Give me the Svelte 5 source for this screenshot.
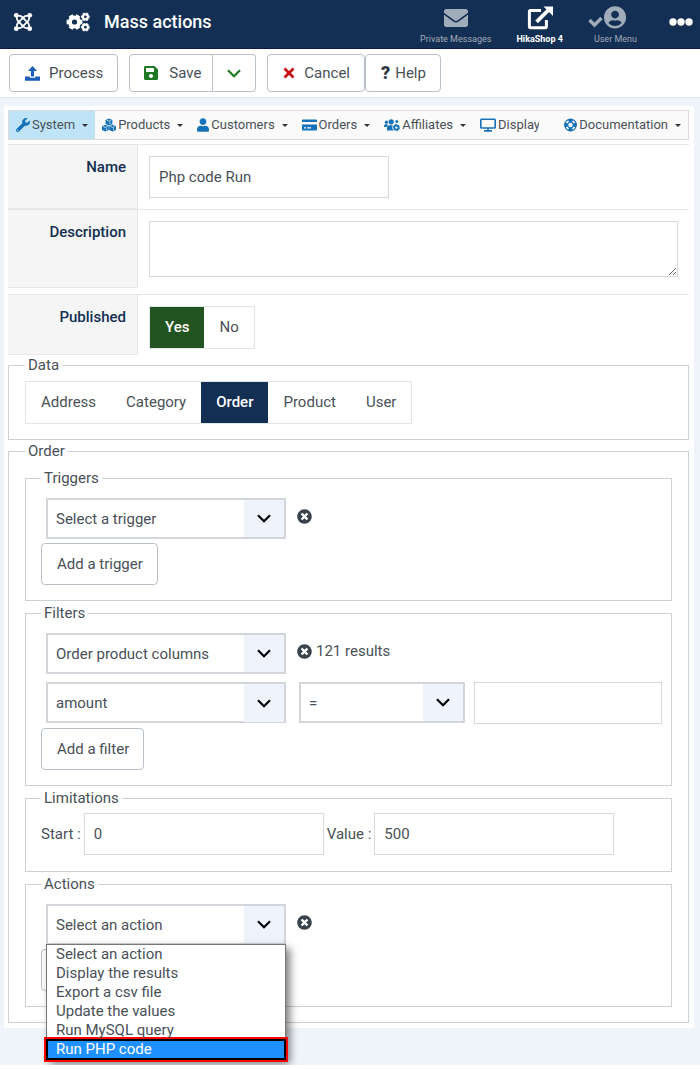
<script>
  const MENU = [
    { label: 'System', icon: 'wrench', caret: true },
    { label: 'Products', icon: 'cubes', caret: true },
    { label: 'Customers', icon: 'user', caret: true },
    { label: 'Orders', icon: 'card', caret: true },
    { label: 'Affiliates', icon: 'users', caret: true },
    { label: 'Display', icon: 'desktop', caret: false },
    { label: 'Documentation', icon: 'ring', caret: true }
  ]
  const TABLES = ['Address', 'Category', 'Order', 'Product', 'User']
  const ACTIONS = [
    'Select an action',
    'Display the results',
    'Export a csv file',
    'Update the values',
    'Run MySQL query',
    'Run PHP code'
  ]

  let name = $state('Php code Run')
  let description = $state('')
  let published = $state('Yes')
  let table = $state('Order')
  let start = $state('0')
  let limit = $state('500')
  let filterValue = $state('')
  let action = $state('Select an action')
  let highlighted = $state('Run PHP code')
  let open = $state(true)

  function toggleActions(e) {
    e.preventDefault()
    open = !open
  }

  function pickAction(value) {
    action = value
    open = false
  }
</script>

{#snippet icon(kind)}
  {#if kind === 'joomla'}
    <svg width="20" height="20" viewBox="0 0 20 20" fill="none" stroke="currentColor" stroke-width="1.8">
      {#each [0, 90, 180, 270] as r (r)}
        <g transform="rotate({r} 10 10)">
          <circle cx="3.3" cy="3.3" r="2.4" fill="currentColor" stroke="none" />
          <path d="M3.9 4v2.6q0 1.4 1.2 2.6l5.6 5.6" />
          <path d="M4 3.9h2.6q1.4 0 2.6 1.2l1.8 1.8" />
        </g>
      {/each}
    </svg>
  {:else if kind === 'gears'}
    <svg width="24" height="20" viewBox="0 0 24 20" fill="none" stroke="currentColor">
      <circle cx="8.5" cy="10" r="4.6" stroke-width="4" />
      <circle cx="8.5" cy="10" r="6.8" stroke-width="2.4" pathLength="12" stroke-dasharray="1.2 .8" stroke-dashoffset=".6" />
      <circle cx="19.4" cy="4.8" r="2.5" stroke-width="2.2" />
      <circle cx="19.4" cy="4.8" r="3.7" stroke-width="1.2" pathLength="12" stroke-dasharray="1.3 .7" stroke-dashoffset=".6" />
      <circle cx="19.4" cy="15.2" r="2.5" stroke-width="2.2" />
      <circle cx="19.4" cy="15.2" r="3.7" stroke-width="1.2" pathLength="12" stroke-dasharray="1.3 .7" stroke-dashoffset=".6" />
    </svg>
  {:else if kind === 'envelope'}
    <svg width="24" height="24" viewBox="0 0 512 512" fill="currentColor">
      <path d="M502.3 190.8c3.9-3.1 9.7-.2 9.7 4.7V400c0 26.5-21.5 48-48 48H48c-26.5 0-48-21.5-48-48V195.6c0-5 5.7-7.8 9.7-4.7 22.4 17.4 52.1 39.5 154.1 113.6 21.1 15.4 56.7 47.8 92.2 47.6 35.7.3 72-32.8 92.3-47.6 102-74.1 131.6-96.3 154-113.7zM256 320c23.2.4 56.6-29.2 73.4-41.4 132.7-96.3 142.8-104.7 173.4-128.7 5.8-4.5 9.2-11.5 9.2-18.9v-19c0-26.5-21.5-48-48-48H48c-26.5 0-48 21.5-48 48v19c0 7.4 3.4 14.3 9.2 18.9 30.6 23.9 40.7 32.4 173.4 128.7 16.8 12.2 50.2 41.8 73.4 41.4z" />
    </svg>
  {:else if kind === 'external'}
    <svg width="26" height="24" viewBox="0 0 26 24" fill="none" stroke="currentColor">
      <path d="M14 4.6H3.6q-1.2 0-1.2 1.2v14.8q0 1.2 1.2 1.2h14.6q1.2 0 1.2-1.2V14" stroke-width="3" />
      <path d="M9.6 15.8 21.5 4" stroke-width="3.8" />
      <path d="M16.5.5H26v9.5z" fill="currentColor" stroke="none" />
    </svg>
  {:else if kind === 'usermenu'}
    <svg width="38" height="24" viewBox="0 0 38 24" fill="currentColor">
      <path d="m1.5 14 5 5 7-7" fill="none" stroke="currentColor" stroke-width="3.4" />
      <g transform="translate(16 0) scale(.0446)">
        <path d="M248 8C111 8 0 119 0 256s111 248 248 248 248-111 248-248S385 8 248 8zm0 96c48.6 0 88 39.4 88 88s-39.4 88-88 88-88-39.4-88-88 39.4-88 88-88zm0 344c-58.7 0-111.3-26.6-146.5-68.2 18.8-35.4 55.6-59.8 98.5-59.8 2.4 0 4.8.4 7.1 1.1 13 4.2 26.6 6.9 40.9 6.9 14.3 0 28-2.7 40.9-6.9 2.3-.7 4.7-1.1 7.1-1.1 42.9 0 79.7 24.4 98.5 59.8C359.3 421.4 306.7 448 248 448z" />
      </g>
    </svg>
  {:else if kind === 'dots'}
    <svg width="24" height="8" viewBox="0 0 24 8" fill="currentColor">
      <circle cx="4" cy="4" r="3.7" /><circle cx="12" cy="4" r="3.7" /><circle cx="20" cy="4" r="3.7" />
    </svg>
  {:else if kind === 'upload'}
    <svg width="15" height="15" viewBox="0 0 15 15" fill="currentColor">
      <path d="M7.5 0 12 5H9v5.5H6V5H3z" />
      <path d="M0 10.5h4.8v1.3h5.4v-1.3H15v4.3H0z" />
    </svg>
  {:else if kind === 'save'}
    <svg width="14" height="16" viewBox="0 0 448 512" fill="currentColor">
      <path d="M433.941 129.941l-83.882-83.882A48 48 0 0 0 316.118 32H48C21.49 32 0 53.49 0 80v352c0 26.51 21.49 48 48 48h352c26.51 0 48-21.49 48-48V163.882a48 48 0 0 0-14.059-33.941zM224 416c-35.346 0-64-28.654-64-64 0-35.346 28.654-64 64-64s64 28.654 64 64c0 35.346-28.654 64-64 64zm96-304.52V212c0 6.627-5.373 12-12 12H76c-6.627 0-12-5.373-12-12V108c0-6.627 5.373-12 12-12h228.52c3.183 0 6.235 1.264 8.485 3.515l3.48 3.48A11.996 11.996 0 0 1 320 111.48z" />
    </svg>
  {:else if kind === 'chevron'}
    <svg width="14" height="9" viewBox="0 0 14 9" fill="none" stroke="currentColor" stroke-width="2.2">
      <path d="m1 1.3 6 6 6-6" />
    </svg>
  {:else if kind === 'cross'}
    <svg width="12" height="12" viewBox="0 0 12 12" stroke="currentColor" stroke-width="2.8">
      <path d="m1.5 1.5 9 9M10.500 1.500l-9 9" />
    </svg>
  {:else if kind === 'wrench'}
    <svg width="14" height="14" viewBox="0 0 512 512" fill="currentColor">
      <path d="M507.73 109.1c-2.24-9.03-13.54-12.09-20.12-5.51l-74.36 74.36-67.88-11.31-11.31-67.88 74.36-74.36c6.62-6.62 3.43-17.9-5.66-20.16-47.38-11.74-99.55.91-136.58 37.93-39.64 39.64-50.55 97.1-34.05 147.2L18.74 402.76c-24.99 24.99-24.99 65.51 0 90.5 24.99 24.99 65.51 24.99 90.5 0l213.21-213.21c50.12 16.71 107.47 5.68 147.37-34.22 37.07-37.07 49.7-89.32 37.91-136.73zM64 472c-13.25 0-24-10.75-24-24 0-13.26 10.75-24 24-24s24 10.74 24 24c0 13.25-10.75 24-24 24z" />
    </svg>
  {:else if kind === 'cubes'}
    <svg width="14" height="14" viewBox="0 0 14 14" fill="currentColor">
      {#each [[3.6, 0.4], [0, 6.6], [7.2, 6.6]] as [x, y] (x)}
        <g transform="translate({x} {y})">
          <path d="M0 1.6 3.4.2l3.400 1.400v3.900L3.400 7 0 5.500z" />
          <path d="m1.200 1.900 2.200.9 2.200-.9M4.300 3.700v2" fill="none" stroke="#fff" stroke-width=".7" />
        </g>
      {/each}
    </svg>
  {:else if kind === 'user'}
    <svg width="12" height="14" viewBox="0 0 448 512" fill="currentColor">
      <path d="M224 256c70.7 0 128-57.3 128-128S294.7 0 224 0 96 57.3 96 128s57.3 128 128 128zm89.6 32h-16.7c-22.2 10.2-46.9 16-72.9 16s-50.6-5.8-72.9-16h-16.7C60.2 288 0 348.2 0 422.4V464c0 26.5 21.5 48 48 48h352c26.5 0 48-21.5 48-48v-41.6c0-74.2-60.2-134.4-134.4-134.4z" />
    </svg>
  {:else if kind === 'card'}
    <svg width="15" height="14" viewBox="0 0 15 14" fill="currentColor" fill-rule="evenodd">
      <path d="M1 1.5h13q1 0 1 1V4H0V2.500q0-1 1-1zM0 6.500h15v5q0 1-1 1H1q-1 0-1-1zM2 9.300v1.200h2V9.300zm3 0v1.200h4V9.300z" />
    </svg>
  {:else if kind === 'users'}
    <svg width="16" height="14" viewBox="0 0 16 14" fill="currentColor">
      <circle cx="2.4" cy="4.2" r="1.6" />
      <circle cx="7.2" cy="3.8" r="2.6" />
      <circle cx="12.8" cy="3.6" r="1.5" />
      <path d="M0 9V8q0-1.700 1.700-1.700h1.600q.7 0 1 .4Q2.900 7.700 2.700 9zM3 12.500V10q0-2.800 2.800-2.800h3Q8 8.600 8.300 10.200q.3 1.300 1.400 2.300z" />
      <circle cx="12.4" cy="9.6" r="2.1" fill="none" stroke="currentColor" stroke-width="1.8" />
      <circle cx="12.4" cy="9.6" r="3.1" fill="none" stroke="currentColor" pathLength="12" stroke-dasharray="1.2 .8" />
    </svg>
  {:else if kind === 'desktop'}
    <svg width="16" height="14" viewBox="0 0 16 14" fill="none" stroke="currentColor" stroke-width="1.6">
      <rect x=".8" y="1.3" width="14.4" height="8.7" rx=".8" />
      <path d="M8 10v2.5M4 12.9h8" />
    </svg>
  {:else if kind === 'ring'}
    <svg width="13" height="14" viewBox="0 0 13 14" fill="none" stroke="currentColor">
      <circle cx="6.5" cy="7" r="5.8" stroke-width="1.2" />
      <circle cx="6.5" cy="7" r="2.8" stroke-width="1.2" />
      <circle cx="6.5" cy="7" r="4.3" stroke-width="3.2" pathLength="8" stroke-dasharray="1.2 .8" stroke-dashoffset=".6" />
    </svg>
  {:else if kind === 'remove'}
    <svg width="15" height="15" viewBox="0 0 512 512" fill="currentColor">
      <path d="M256 8C119 8 8 119 8 256s111 248 248 248 248-111 248-248S393 8 256 8zm121.6 313.1c4.7 4.7 4.7 12.3 0 17L338 377.6c-4.7 4.7-12.3 4.7-17 0L256 312l-65.1 65.6c-4.7 4.7-12.3 4.7-17 0L134.4 338c-4.7-4.7-4.7-12.3 0-17l65.6-65-65.6-65.1c-4.7-4.7-4.7-12.3 0-17l39.6-39.6c4.7-4.7 12.3-4.7 17 0l65 65.7 65.1-65.6c4.7-4.7 12.3-4.7 17 0l39.6 39.6c4.7 4.7 4.7 12.3 0 17L312 256l65.6 65.1z" />
    </svg>
  {/if}
{/snippet}

{#snippet dropdown(label, value)}
  <div class="select">
    <select aria-label={label}>
      <option>{value}</option>
    </select>
    <span class="arrow">{@render icon('chevron')}</span>
  </div>
{/snippet}

<header class="topbar">
  <a class="brand" href="#home" aria-label="Home">{@render icon('joomla')}</a>
  {@render icon('gears')}
  <h1>Mass actions</h1>
  <nav class="shortcuts" aria-label="Shortcuts">
    <a href="#messages">{@render icon('envelope')}<span>Private Messages</span></a>
    <a class="current" href="#shop">{@render icon('external')}<span>HikaShop 4</span></a>
    <a class="account" href="#account">{@render icon('usermenu')}<span>User Menu</span></a>
  </nav>
  <button class="more" aria-label="More">{@render icon('dots')}</button>
</header>

<div class="toolbar">
  <button class="btn process">{@render icon('upload')}Process</button>
  <div class="group">
    <button class="btn save">{@render icon('save')}Save</button>
    <button class="btn save-more" aria-label="More save options">{@render icon('chevron')}</button>
  </div>
  <div class="group">
    <button class="btn cancel">{@render icon('cross')}Cancel</button>
    <button class="btn help"><b>?</b>Help</button>
  </div>
</div>

<main>
  <div class="card">
    <nav class="menu" aria-label="Shop">
      {#each MENU as item, i (item.label)}
        <a class:active={i === 0} class:last={i === MENU.length - 1} href="#{item.icon}">
          {@render icon(item.icon)}
          <span class:clipped={!item.caret}>{item.label}</span>
          {#if item.caret}<i class="caret"></i>{/if}
        </a>
      {/each}
    </nav>

    <div class="row">
      <label class="key" for="name">Name</label>
      <div class="value"><input id="name" type="text" bind:value={name} /></div>
    </div>
    <div class="row">
      <label class="key" for="description">Description</label>
      <div class="value"><textarea id="description" bind:value={description}></textarea></div>
    </div>
    <div class="row spaced">
      <span class="key" id="published">Published</span>
      <div class="value">
        <div class="switch" role="radiogroup" aria-labelledby="published">
          {#each ['Yes', 'No'] as option (option)}
            <label class:yes={option === 'Yes' && published === 'Yes'}>
              <input type="radio" name="published" value={option} bind:group={published} />{option}
            </label>
          {/each}
        </div>
      </div>
    </div>

    <fieldset class="outer data">
      <legend>Data</legend>
      <div class="switch">
        {#each TABLES as option (option)}
          <label class:picked={table === option}>
            <input type="radio" name="table" value={option} bind:group={table} />{option}
          </label>
        {/each}
      </div>
    </fieldset>

    <fieldset class="outer">
      <legend>Order</legend>

      <fieldset class="inner">
        <legend>Triggers</legend>
        <div class="line">
          {@render dropdown('Trigger', 'Select a trigger')}
          <button class="remove" aria-label="Remove trigger">{@render icon('remove')}</button>
        </div>
        <button class="btn add">Add a trigger</button>
      </fieldset>

      <fieldset class="inner">
        <legend>Filters</legend>
        <div class="line">
          {@render dropdown('Filter', 'Order product columns')}
          <button class="remove" aria-label="Remove filter">{@render icon('remove')}</button>
          <span class="results">121 results</span>
        </div>
        <div class="line condition">
          {@render dropdown('Column', 'amount')}
          <div class="operator">{@render dropdown('Operator', '=')}</div>
          <input type="text" aria-label="Filter value" bind:value={filterValue} />
        </div>
        <button class="btn add">Add a filter</button>
      </fieldset>

      <fieldset class="inner limits">
        <legend>Limitations</legend>
        <div class="limit-line">
          <label for="start">Start :</label>
          <input id="start" type="text" bind:value={start} />
          <label for="limit">Value :</label>
          <input id="limit" type="text" bind:value={limit} />
        </div>
      </fieldset>

      <fieldset class="inner">
        <legend>Actions</legend>
        <div class="line">
          <div class="select">
            <select aria-label="Action" bind:value={action} onmousedown={toggleActions}>
              {#each ACTIONS as option (option)}
                <option>{option}</option>
              {/each}
            </select>
            <span class="arrow">{@render icon('chevron')}</span>
            {#if open}
              <div class="popup" role="listbox" aria-label="Actions">
                {#each ACTIONS as option (option)}
                  <button
                    role="option"
                    aria-selected={highlighted === option}
                    class:highlighted={highlighted === option}
                    onmouseenter={() => (highlighted = option)}
                    onclick={() => pickAction(option)}
                  >
                    {option}
                  </button>
                {/each}
              </div>
            {/if}
          </div>
          <button class="remove" aria-label="Remove action">{@render icon('remove')}</button>
        </div>
        <button class="btn add">Add an action</button>
      </fieldset>
    </fieldset>
  </div>
</main>

<style>
  :global(body) {
    background: #fff;
    color: #495057;
    font-family: Roboto, sans-serif;
    font-size: 15px;
    line-height: 18px;
  }

  * {
    box-sizing: border-box;
  }

  svg {
    display: block;
    flex: none;
  }

  button,
  input,
  select,
  textarea {
    color: inherit;
    font: inherit;
    margin: 0;
  }

  a {
    color: inherit;
    text-decoration: none;
  }

  .topbar {
    display: flex;
    align-items: center;
    height: 49px;
    padding: 0 7px 4px 13px;
    background: #132f53;
    border-bottom: 1px solid #0b1a40;
    color: #fff;
  }

  .brand {
    margin-right: 33px;
  }

  h1 {
    flex: 1;
    margin: 0 0 0 14px;
    font-size: 18px;
    font-weight: 500;
    white-space: nowrap;
  }

  .shortcuts {
    display: flex;
    gap: 25px;
    padding-top: 7px;
  }

  .shortcuts a {
    display: flex;
    flex-direction: column;
    align-items: center;
    gap: 3px;
    color: #a1acba;
    font-size: 9px;
    line-height: 12px;
    white-space: nowrap;
  }

  .shortcuts .current {
    color: #fff;
    font-weight: 700;
  }

  .shortcuts .account {
    align-items: flex-start;
  }

  .account span {
    padding-left: 6px;
  }

  .more {
    margin-left: 32px;
    padding: 0;
    background: none;
    border: 0;
    color: #fff;
  }

  .toolbar {
    display: flex;
    gap: 11px;
    padding: 5px 9px;
    border-bottom: 1px solid #e4e8f0;
  }

  .group {
    display: flex;
  }

  .btn {
    display: flex;
    align-items: center;
    justify-content: center;
    height: 38px;
    padding: 0 14px 0 15px;
    gap: 9px;
    background: #fff;
    border: 1px solid #b8c0c9;
    border-radius: 4px;
    white-space: nowrap;
    cursor: pointer;
  }

  .process svg {
    color: #1d5fb8;
  }

  .save {
    padding: 0 11px 0 14px;
    gap: 11px;
    border-radius: 4px 0 0 4px;
  }

  .save svg,
  .save-more {
    color: #1b7a23;
  }

  .save-more {
    padding: 0 14px;
    border-left: 0;
    border-radius: 0 4px 4px 0;
  }

  .cancel svg {
    color: #c40f14;
  }

  .help {
    gap: 5px;
  }

  .help b {
    font-size: 18px;
    font-weight: 900;
    color: #2c3640;
  }

  main {
    padding: 8px 6px 37px 4px;
    background: #eff4fb;
  }

  .card {
    padding: 4px 5px 5px 4px;
    background: #fff;
  }

  .menu {
    display: flex;
    margin-bottom: 4px;
    background: #fafafa;
    border: 1px solid #dcdcdc;
    font-size: 13px;
  }

  .menu a {
    display: flex;
    align-items: center;
    height: 28px;
    padding: 0 7px;
    gap: 2px;
    white-space: nowrap;
  }

  .menu svg {
    color: #1572b8;
  }

  .menu .active {
    background: #bfe3f7;
  }

  .menu .last {
    margin-left: auto;
  }

  .clipped {
    width: 41px;
    overflow: hidden;
  }

  .caret {
    margin-left: 5px;
    border: 3px solid transparent;
    border-top-color: #333;
    border-bottom: 0;
  }

  .row {
    display: flex;
    border-top: 1px solid #e4e7ea;
  }

  .key {
    width: 130px;
    flex: none;
    padding: 13px 11px 0 0;
    background: #f5f5f5;
    border-right: 1px solid #e6e8ea;
    border-bottom: 1px solid #e6e8ea;
    color: #132f53;
    font-weight: 500;
    text-align: right;
  }

  .row .value {
    flex: 1;
    display: flex;
    padding: 11px;
  }

  .spaced {
    margin-top: 6px;
  }

  .spaced .value {
    padding-bottom: 6px;
  }

  input[type='text'],
  textarea {
    width: 240px;
    height: 42px;
    padding: 0 9px;
    background: #fff;
    border: 1px solid #d5dade;
    outline: 0;
  }

  textarea {
    flex: 1;
    height: 56px;
    padding: 9px;
  }

  .switch {
    display: inline-flex;
    border: 1px solid #e0e5e9;
  }

  .switch label {
    padding: 12px 15px;
    line-height: 17px;
    cursor: pointer;
  }

  .switch input {
    appearance: none;
    width: 0;
    height: 0;
    position: absolute;
  }

  .switch .yes {
    background: #215421;
    color: #fff;
    font-weight: 500;
  }

  .switch .picked {
    background: #132f53;
    color: #fff;
    font-weight: 500;
  }

  fieldset {
    min-width: 0;
    margin: 0;
    border: 1px solid #ced1d3;
  }

  legend {
    padding: 0 3px;
  }

  .outer {
    margin-top: 2px;
    padding: 9px 16px 15px;
  }

  .data {
    display: flow-root;
    margin-top: 1px;
    padding-top: 7px;
  }

  .inner {
    padding: 11px 9px 15px 15px;
  }

  .inner + .inner {
    margin-top: 3px;
  }

  .line {
    display: flex;
    margin: 0 0 4px 5px;
  }

  .select {
    position: relative;
    display: grid;
    width: 240px;
  }

  .select select {
    grid-area: 1 / 1;
    width: 100%;
    height: 41px;
    padding: 0 44px 0 8px;
    appearance: none;
    background: #fff;
    border: 2px solid #d2d6da;
    border-radius: 0;
  }

  .arrow {
    grid-area: 1 / 1;
    justify-self: end;
    display: grid;
    place-items: center;
    width: 40px;
    margin: 2px;
    background: #eff3fb;
    color: #000;
    pointer-events: none;
  }

  .remove {
    align-self: flex-start;
    margin: 11px 0 0 11px;
    padding: 0;
    background: none;
    border: 0;
    color: #3a434c;
    cursor: pointer;
  }

  .results {
    margin: 9px 0 0 4px;
  }

  .btn.add {
    height: 42px;
  }

  .condition {
    margin-top: 8px;
    gap: 13px;
  }

  .operator .select {
    width: 166px;
  }

  .condition input[type='text'] {
    flex: 1;
    min-width: 0;
    margin-left: -4px;
  }

  .limits {
    padding-top: 6px;
    padding-bottom: 16px;
  }

  .limit-line {
    display: flex;
    align-items: center;
    gap: 3px;
  }

  .popup {
    position: absolute;
    z-index: 2;
    top: 40px;
    left: 0;
    right: 0;
    background: #fff;
    border: 1px solid #777;
    box-shadow: 4px 4px 8px rgba(0, 0, 0, 0.5);
  }

  .popup button {
    display: block;
    width: 100%;
    height: 19px;
    padding: 0 9px;
    background: none;
    border: 0;
    line-height: 19px;
    text-align: left;
  }

  .popup .highlighted {
    background: #1e90ff;
    color: #fff;
    box-shadow:
      inset 0 0 0 1px #000,
      0 0 0 1px #000,
      0 0 0 3px #f00;
  }
</style>
